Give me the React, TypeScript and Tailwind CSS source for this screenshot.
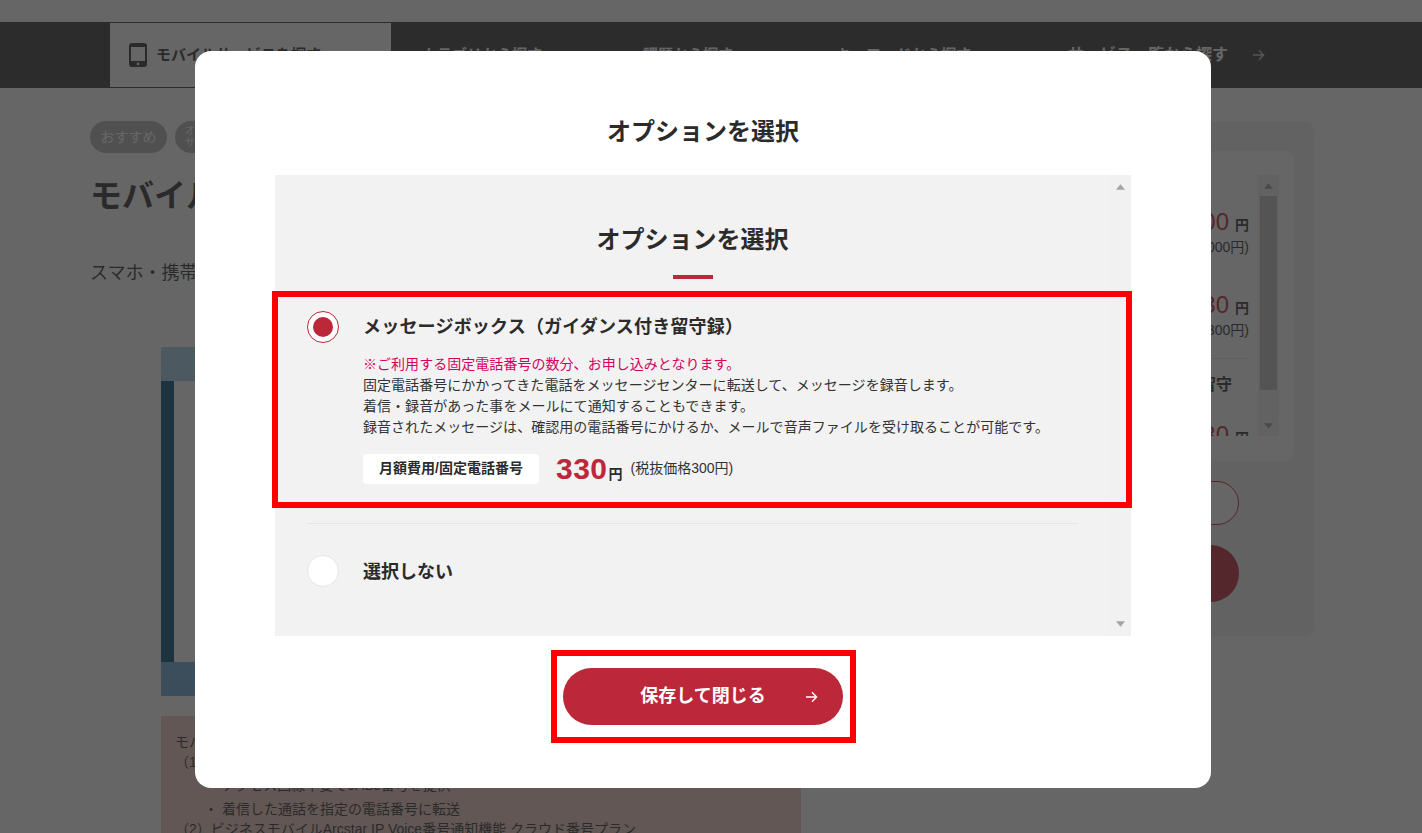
export default function App() {
  const Arrow = ({ className }: { className: string }) => (
    <svg viewBox="0 0 14 12" fill="none" stroke="currentColor" strokeWidth="1.5" className={className}>
      <path d="M1 6h11.5M7.5 1l5 5-5 5" />
    </svg>
  );
  const Up = () => (
    <svg viewBox="0 0 10 6" className="w-[9px] h-[6px] fill-[#a3a3a3]"><path d="M5 0l5 6H0z" /></svg>
  );
  const Down = () => (
    <svg viewBox="0 0 10 6" className="w-[9px] h-[6px] fill-[#a3a3a3]"><path d="M0 0h10L5 6z" /></svg>
  );
  const Price = ({ n, sub }: { n: string; sub: string }) => (
    <div className="flex flex-col items-end">
      <div className="flex items-baseline gap-[6px] text-[#333]">
        <span className="text-[24px] text-[#bc2739] leading-[30px]">{n}</span>
        <span className="text-[14px] font-bold">円</span>
      </div>
      <div className="text-[14px] leading-[20px] text-[#333]">{sub}</div>
    </div>
  );
  return (
    <div className="relative h-[833px] w-[1422px] overflow-hidden bg-white font-['Liberation_Sans','Noto_Sans_CJK_JP',sans-serif] text-[#333]">
      <div className="h-[22px]" />
      <nav className="flex h-[66px] items-center bg-[#3a3a3a] pl-[110px] text-[15px] font-bold text-white">
        <div className="flex h-[64px] w-[281px] items-center gap-[9px] bg-white pl-[19px] text-[#333]">
          <svg viewBox="0 0 18 24" className="h-[24px] w-[18px]">
            <path fillRule="evenodd" fill="#333" d="M3 0h12a3 3 0 0 1 3 3v18a3 3 0 0 1-3 3H3a3 3 0 0 1-3-3V3a3 3 0 0 1 3-3zM2 4v14h14V4zm7 15.6a1.3 1.3 0 1 0 0 2.6 1.3 1.3 0 0 0 0-2.6z" />
          </svg>
          <span>モバイルサービスを探す</span>
        </div>
        <div className="w-[252px] pl-[31px]">カテゴリから探す</div>
        <div className="w-[193px]">課題から探す</div>
        <div className="w-[232px]">キーワードから探す</div>
        <div className="flex items-center gap-[24px]">
          <span className="text-[16px]">サービス一覧から探す</span>
          <Arrow className="h-[12px] w-[13px] text-[#c4c4c4]" />
        </div>
      </nav>

      <main className="flex pl-[90px]">
        <div className="w-[782px] pt-[33px]">
          <div className="flex gap-[8px]">
            <span className="flex h-[32px] w-[77px] items-center justify-center rounded-full bg-[#b4b4b4] text-[14px] text-white">おすすめ</span>
            <span className="flex h-[32px] w-[100px] flex-col justify-center rounded-full bg-[#b4b4b4] pl-[10px] text-[10px] leading-[12px] text-white">
              <span>オプション</span>
              <span>サービス</span>
            </span>
          </div>
          <h1 className="mt-[23px] text-[32px] font-bold leading-[40px]">モバイルサービス</h1>
          <p className="mt-[42px] text-[18px] leading-[30px]">スマホ・携帯電話のサービス</p>
          <div className="ml-[71px] mt-[59px] h-[349px] w-[640px] bg-gradient-to-b from-[#a8d4ea] to-[#6aa8d8] pt-[34px]">
            <div className="flex h-[281px] bg-white">
              <div className="w-[13px] bg-[#0a4f7c]" />
            </div>
          </div>
          <div className="ml-[71px] mt-[20px] h-[200px] w-[640px] bg-[#f1cbc5] pl-[14px] pt-[16px] text-[14px] leading-[20px]">
            <p>モバイルサービス</p>
            <p>（1）クラウド番号</p>
            <ul className="mb-[-2px] mt-px leading-[24px]">
              <li className="pl-[47px]">アクセス回線不要で0ABJ番号を提供</li>
              <li className="pl-[29px]">・ 着信した通話を指定の電話番号に転送</li>
            </ul>
            <p>（2）ビジネスモバイルArcstar IP Voice番号通知機能 クラウド番号プラン</p>
          </div>
        </div>

        <aside className="ml-[22px] mt-[34px] h-[514px] w-[420px] rounded-[8px] bg-[#f1f1f1] px-[20px] pt-[29px]">
          <div className="h-[310px] rounded-[8px] bg-white pl-[20px] pr-[15px] pt-[24px]">
            <div className="flex h-[261px] overflow-hidden">
              <div className="flex-1 pr-[9px] pt-[32px]">
                <Price n="1,000" sub="(税抜価格1,000円)" />
                <div className="mt-[33px]"><Price n="1,430" sub="(税抜価格1,300円)" /></div>
                <div className="mt-[18px] border-t border-[#e5e5e5] pr-[17px] pt-[16px] text-right text-[16px] font-bold leading-[20px]">ガイダンス付き留守</div>
                <div className="mt-[25px]"><Price n="1,430" sub="" /></div>
              </div>
              <div className="flex h-[261px] w-[21px] flex-col items-center bg-[#f1f1f1]">
                <div className="flex h-[21px] items-center"><Up /></div>
                <div className="h-[194px] w-[17px] bg-[#c1c1c1]" />
                <div className="flex flex-1 items-end pb-[7px]"><Down /></div>
              </div>
            </div>
          </div>
          <div className="mr-[55px] mt-[20px] h-[44px] rounded-full border border-[#bc2739] bg-white" />
          <div className="mr-[55px] mt-[20px] h-[57px] rounded-full bg-[#bc2739]" />
        </aside>
      </main>

      <div className="absolute inset-0 bg-[rgba(39,39,39,0.71)]" />

      <div className="absolute left-[195px] top-[51px] h-[737px] w-[1016px] rounded-[16px] bg-white px-[80px] pt-[63px] text-[#2b2b2b]">
        <h2 className="text-center text-[24px] font-bold leading-[36px]">オプションを選択</h2>
        <div className="relative mt-[25px] flex h-[461px] bg-[#f2f2f2]">
          <div className="w-[835px] pt-[47px]">
            <h3 className="text-center text-[24px] font-bold leading-[36px]">オプションを選択</h3>
            <div className="mx-auto mt-[17px] h-[4px] w-[40px] bg-[#bc2739]" />
            <div className="mt-[18px] h-[205px] pl-[32px] pt-[14px]">
              <div className="flex h-[32px] items-center gap-[24px]">
                <span className="flex h-[32px] w-[32px] items-center justify-center rounded-full border border-[#bc2739] bg-white">
                  <span className="h-[20px] w-[20px] rounded-full bg-[#bc2739]" />
                </span>
                <span className="text-[18px] font-bold tracking-[0.2px]">メッセージボックス（ガイダンス付き留守録）</span>
              </div>
              <div className="ml-[56px] mt-[11px] text-[14px] leading-[21px] tracking-[0.04px] text-[#333]">
                <p className="text-[#d6005f]">※ご利用する固定電話番号の数分、お申し込みとなります。</p>
                <p>固定電話番号にかかってきた電話をメッセージセンターに転送して、メッセージを録音します。</p>
                <p>着信・録音があった事をメールにて通知することもできます。</p>
                <p>録音されたメッセージは、確認用の電話番号にかけるか、メールで音声ファイルを受け取ることが可能です。</p>
              </div>
              <div className="ml-[56px] mt-[16px] flex h-[30px] items-center">
                <span className="flex h-[30px] w-[176px] items-center justify-center rounded-[4px] bg-white pb-px text-[14px] font-bold">月額費用/固定電話番号</span>
                <span className="ml-[17px] text-[30px] font-bold leading-[30px] tracking-[0.5px] text-[#bc2739]">330</span>
                <span className="ml-[1px] mt-[10px] text-[14px] font-bold leading-[20px]">円</span>
                <span className="ml-[8px] mt-[-2px] text-[14px] leading-[20px] text-[#333]">(税抜価格300円)</span>
              </div>
            </div>
            <div className="ml-[32px] mt-[21px] h-px w-[771px] bg-[#e5e5e5]" />
            <div className="ml-[32px] mt-[31px] flex h-[32px] items-center gap-[24px]">
              <span className="h-[32px] w-[32px] rounded-full border border-[#e5e5e5] bg-white" />
              <span className="pt-[2px] text-[18px] font-bold">選択しない</span>
            </div>
          </div>
          <div className="flex w-[21px] flex-col items-center justify-between bg-[#f1f1f1] py-[9px]">
            <Up />
            <Down />
          </div>
          <div className="pointer-events-none absolute left-[-3px] top-[116px] h-[217px] w-[860px] border-[6px] border-[#ff0000]" />
        </div>
        <div className="relative mx-auto mt-[32px] flex h-[57px] w-[280px] items-center justify-center rounded-full bg-[#bc2739] text-[18px] font-bold text-white">
          保存して閉じる
          <Arrow className="absolute right-[25px] h-[12px] w-[13px] text-white" />
          <div className="pointer-events-none absolute bottom-[-18px] left-[-12px] right-[-13px] top-[-18px] border-[6px] border-[#ff0000]" />
        </div>
      </div>
    </div>
  );
}
